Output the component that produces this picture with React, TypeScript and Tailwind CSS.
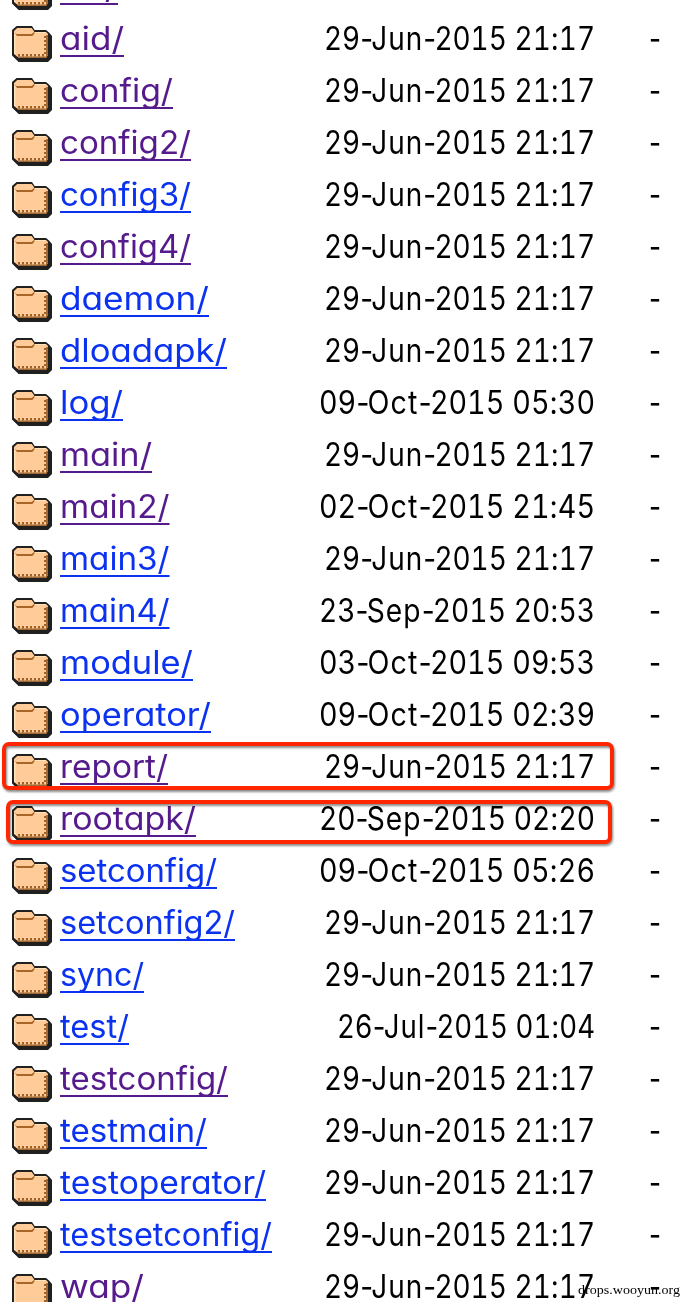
import { useLayoutEffect, useRef, useState, type ReactNode } from "react";

type Entry = { name: string; width: number; date: string; visited?: boolean };

const entries: Entry[] = [
  { name: "ad/", width: 58, date: "29-Jun-2015 21:17", visited: true },
  { name: "aid/", width: 64, date: "29-Jun-2015 21:17", visited: true },
  { name: "config/", width: 113, date: "29-Jun-2015 21:17", visited: true },
  { name: "config2/", width: 131, date: "29-Jun-2015 21:17", visited: true },
  { name: "config3/", width: 131, date: "29-Jun-2015 21:17" },
  { name: "config4/", width: 131, date: "29-Jun-2015 21:17", visited: true },
  { name: "daemon/", width: 149, date: "29-Jun-2015 21:17" },
  { name: "dloadapk/", width: 167, date: "29-Jun-2015 21:17" },
  { name: "log/", width: 63, date: "09-Oct-2015 05:30" },
  { name: "main/", width: 92, date: "29-Jun-2015 21:17", visited: true },
  { name: "main2/", width: 109.5, date: "02-Oct-2015 21:45", visited: true },
  { name: "main3/", width: 109.5, date: "29-Jun-2015 21:17" },
  { name: "main4/", width: 109.5, date: "23-Sep-2015 20:53" },
  { name: "module/", width: 133, date: "03-Oct-2015 09:53" },
  { name: "operator/", width: 151, date: "09-Oct-2015 02:39" },
  { name: "report/", width: 108, date: "29-Jun-2015 21:17", visited: true },
  { name: "rootapk/", width: 136, date: "20-Sep-2015 02:20", visited: true },
  { name: "setconfig/", width: 157, date: "09-Oct-2015 05:26" },
  { name: "setconfig2/", width: 175, date: "29-Jun-2015 21:17" },
  { name: "sync/", width: 84, date: "29-Jun-2015 21:17" },
  { name: "test/", width: 69, date: "26-Jul-2015 01:04" },
  { name: "testconfig/", width: 168, date: "29-Jun-2015 21:17", visited: true },
  { name: "testmain/", width: 147, date: "29-Jun-2015 21:17" },
  { name: "testoperator/", width: 206, date: "29-Jun-2015 21:17" },
  { name: "testsetconfig/", width: 212, date: "29-Jun-2015 21:17" },
  { name: "wap/", width: 84, date: "29-Jun-2015 21:17", visited: true },
];

const monthWidth: Record<string, number> = { Jun: 271, Oct: 276, Sep: 276, Jul: 258 };

// Stretches or narrows a single line of text to an exact advance width.
function FitText({ children, width, className = "" }: { children: ReactNode; width: number; className?: string }) {
  const ref = useRef<HTMLSpanElement>(null);
  const [scale, setScale] = useState(1);
  useLayoutEffect(() => {
    if (ref.current) setScale(width / parseFloat(getComputedStyle(ref.current).width));
  }, [width]);
  return (
    <span className="block" style={{ width }}>
      <span
        ref={ref}
        className={`inline-block origin-left whitespace-pre ${className}`}
        style={{ transform: `scaleX(${scale})` }}
      >
        {children}
      </span>
    </span>
  );
}

function DateText({ date }: { date: string }) {
  const month = date.slice(3, 6);
  const digits = "[font-feature-settings:'tnum']";
  return (
    <FitText width={monthWidth[month]}>
      <span className={digits}>{date.slice(0, 2)}</span>
      <span className="tracking-[-2px]">-</span>
      <span className="tracking-[1.2px]">{month}</span>
      <span className="tracking-[-2px]">-</span>
      <span className={digits}>{date.slice(7, 11)}</span>{" "}
      <span className={digits}>{date.slice(12, 14)}</span>:
      <span className={digits}>{date.slice(15)}</span>
    </FitText>
  );
}

function Folder() {
  return (
    <svg viewBox="0 0 20 18" className="mt-3 h-9 w-10 shrink-0">
      <path d="M2.3 0H10L11.3 2H17L18.5 3.2L20 5V16L18 18H3.3L0 14.8V2Z" fill="#20201f" />
      <path d="M2.6 1H9.8L11 2.5V3H17L18 4V14.5L17 16H3.5L1 14V2.5Z" fill="#ffcc99" />
      <path d="M1 4H1.7V14H1ZM11 3H17V3.5H11Z" fill="#ffe3bd" />
      <path d="M1.4 3.2L2.2 4H9.8L11.3 2.8L11.2 3.8L10.2 5H2.5Z" fill="#a86628" />
      <path d="M17 4.5H18V14.5L17 16H3.5L2.7 15.2H17Z" fill="#a46a33" />
      <path
        d="M16 5H17V6H16ZM16 7H17V8H16ZM16 9H17V10H16ZM16 11H17V12H16ZM16 13H17V14H16ZM3 14H4V15.3H3ZM5 14H6V15.3H5ZM7 14H8V15.3H7ZM9 14H10V15.3H9ZM11 14H12V15.3H11ZM13 14H14V15.3H13ZM15 14H16V15.3H15Z"
        fill="#a0602a"
      />
    </svg>
  );
}

export default function App() {
  return (
    <div className="relative h-[1302px] w-[684px] overflow-hidden bg-white font-['Inter',sans-serif] text-[32px] leading-[50px] font-[370] text-black [font-feature-settings:'cv11']">
      <div className="-mt-[38px] flex flex-col">
        {entries.map((e) => (
          <div key={e.name} className="flex h-[52px] shrink-0 pl-3">
            <Folder />
            <a className={`ml-2 block w-[220px] ${e.visited ? "text-[#551a8b]" : "text-[#0a32f0]"}`}>
              <FitText
                width={e.width}
                className="underline decoration-2 underline-offset-[5px] [text-decoration-skip-ink:none]"
              >
                {e.name}
              </FitText>
            </a>
            <div className="flex w-[315px] justify-end">
              <DateText date={e.date} />
            </div>
            <span className="ml-[54px]">
              <FitText width={12}>-</FitText>
            </span>
          </div>
        ))}
      </div>
      <div className="absolute top-[742px] left-[2px] h-12 w-[612px] rounded-[7px] border-4 border-[#ff2600] drop-shadow-[1px_2px_1px_rgba(0,0,0,0.45)]" />
      <div className="absolute top-[800px] left-[6px] h-11 w-[606px] rounded-[7px] border-4 border-[#ff2600] drop-shadow-[1px_2px_1px_rgba(0,0,0,0.45)]" />
      <div className="absolute top-[1282px] left-[578px] font-['Liberation_Serif',serif] text-[13px] leading-4 font-normal">
        <FitText width={102}>drops.wooyun.org</FitText>
      </div>
    </div>
  );
}
